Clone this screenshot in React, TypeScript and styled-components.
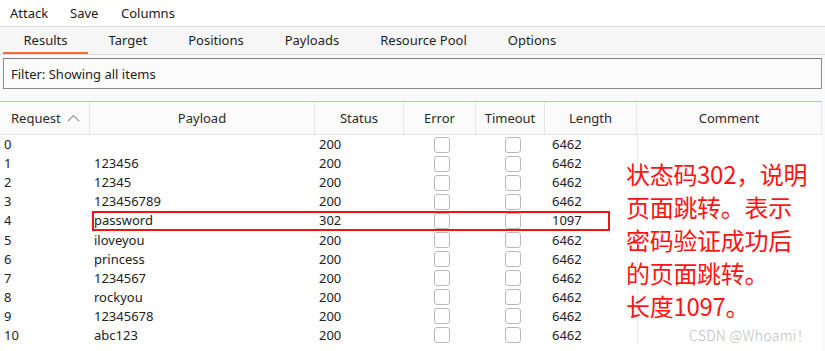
import React from "react";
import styled, { createGlobalStyle } from "styled-components";

const Global = createGlobalStyle`
  html, body { margin: 0; padding: 0; }
  body {
    width: 825px; height: 351px; overflow: hidden;
    background: #ffffff;
    font-family: "Noto Sans", "DejaVu Sans", sans-serif;
    font-size: 13px; color: #1e1e1e;
  }
`;

const Page = styled.div`
  width: 825px; height: 351px; display: flex; flex-direction: column;
  background: #fafafa;
`;

const MenuBar = styled.div`
  height: 26px; display: flex; align-items: center; gap: 0;
  padding-left: 10px; background: #ffffff;
`;
const MenuItem = styled.span<{ w: number }>`
  width: ${(p) => p.w}px; line-height: 26px; color: #1a1a1a;
`;

const TabBar = styled.div`
  height: 27px; display: flex; align-items: stretch;
  padding-left: 3px; background: #f6f6f6;
  border-top: 1px solid #dcdcdc; border-bottom: 1px solid #dadada;
`;
const Tab = styled.div<{ active?: boolean }>`
  padding: 0 20.5px; display: flex; align-items: center;
  box-sizing: border-box;
  border-bottom: 2px solid ${(p) => (p.active ? "#ff6633" : "transparent")};
  padding-top: 1px; color: #1e1e1e;
`;

const FilterBox = styled.div`
  margin: 3px 3px 0 3px; height: 31px; box-sizing: border-box;
  border: 1px solid #8c8c8c; border-top-color: #7a7a7a;
  background: #fbfbfb; display: flex; align-items: center; padding-left: 7px;
`;

const TableWrap = styled.div`
  margin: 12px 3px 0 0; position: relative; flex: 1;
  border-top: 1px solid #a8c4e4; background: #ffffff;
`;

const cols = "90px 225px 89px 72px 69px 92px 185px";

const HeaderRow = styled.div`
  display: grid; grid-template-columns: ${cols}; height: 32px;
  background: #fbfbfb; border-bottom: 1px solid #e6e6e6;
`;
const HeadCell = styled.div<{ left?: boolean }>`
  display: flex; align-items: center;
  justify-content: ${(p) => (p.left ? "flex-start" : "center")};
  padding-left: ${(p) => (p.left ? "11px" : "0")};
  border-right: 1px solid #e4e4e4; color: #2a2a2a; gap: 6px;
`;

const Row = styled.div`
  display: grid; grid-template-columns: ${cols}; height: 19.1px;
  align-items: center;
`;
const Cell = styled.div<{ pad?: number }>`
  padding-left: ${(p) => p.pad ?? 4}px; line-height: 19px; white-space: nowrap;
  color: #222;
`;
const CheckCell = styled.div`
  display: flex; justify-content: center; padding-left: 4px; height: 19px; align-items: center;
`;
const Box = styled.div`
  width: 16px; height: 16px; box-sizing: border-box;
  border: 1px solid #b9b9b9; border-radius: 3px; background: #fff;
`;
const CommentCell = styled.div`
  height: 19.1px; border-left: 1px solid #ececec;
`;

const Highlight = styled.div`
  position: absolute; left: 92px; top: 109px; width: 518px; height: 20px;
  box-sizing: border-box; border: 2px solid #f01414;
`;

const Note = styled.div`
  position: absolute; left: 626px; top: 55px;
  font-family: "Noto Sans CJK SC", "Noto Sans", sans-serif;
  font-size: 24px; font-weight: 400; line-height: 33px; color: #ff1414; white-space: pre;
  letter-spacing: -0.3px;
`;

const Watermark = styled.div`
  position: absolute; left: 689px; top: 223px;
  font-family: "Noto Sans CJK SC", "Noto Sans", sans-serif;
  font-size: 14px; font-weight: 300; color: #bcbcbc; letter-spacing: 0.3px;
`;

const rows: [string, string, string, string][] = [
  ["0", "", "200", "6462"],
  ["1", "123456", "200", "6462"],
  ["2", "12345", "200", "6462"],
  ["3", "123456789", "200", "6462"],
  ["4", "password", "302", "1097"],
  ["5", "iloveyou", "200", "6462"],
  ["6", "princess", "200", "6462"],
  ["7", "1234567", "200", "6462"],
  ["8", "rockyou", "200", "6462"],
  ["9", "12345678", "200", "6462"],
  ["10", "abc123", "200", "6462"],
];

const Caret = () => (
  <svg width="13" height="8" viewBox="0 0 13 8">
    <polyline points="1,7 6.5,1.5 12,7" fill="none" stroke="#9a9a9a" strokeWidth="1.1" />
  </svg>
);

export default function App() {
  return (
    <>
      <Global />
      <Page>
        <MenuBar>
          <MenuItem w={60}>Attack</MenuItem>
          <MenuItem w={51}>Save</MenuItem>
          <MenuItem w={70}>Columns</MenuItem>
        </MenuBar>
        <TabBar>
          <Tab active>Results</Tab>
          <Tab>Target</Tab>
          <Tab>Positions</Tab>
          <Tab>Payloads</Tab>
          <Tab>Resource Pool</Tab>
          <Tab>Options</Tab>
        </TabBar>
        <FilterBox>Filter: Showing all items</FilterBox>
        <TableWrap>
          <HeaderRow>
            <HeadCell left>
              Request <Caret />
            </HeadCell>
            <HeadCell>Payload</HeadCell>
            <HeadCell>Status</HeadCell>
            <HeadCell>Error</HeadCell>
            <HeadCell>Timeout</HeadCell>
            <HeadCell>Length</HeadCell>
            <HeadCell>Comment</HeadCell>
          </HeaderRow>
          {rows.map((r) => (
            <Row key={r[0]}>
              <Cell pad={4}>{r[0]}</Cell>
              <Cell>{r[1]}</Cell>
              <Cell>{r[2]}</Cell>
              <CheckCell>
                <Box />
              </CheckCell>
              <CheckCell>
                <Box />
              </CheckCell>
              <Cell pad={7}>{r[3]}</Cell>
              <CommentCell />
            </Row>
          ))}
          <Highlight />
          <Note>{"状态码302，说明\n页面跳转。表示\n密码验证成功后\n的页面跳转。\n长度1097。"}</Note>
          <Watermark>CSDN @Whoami！</Watermark>
        </TableWrap>
      </Page>
    </>
  );
}
